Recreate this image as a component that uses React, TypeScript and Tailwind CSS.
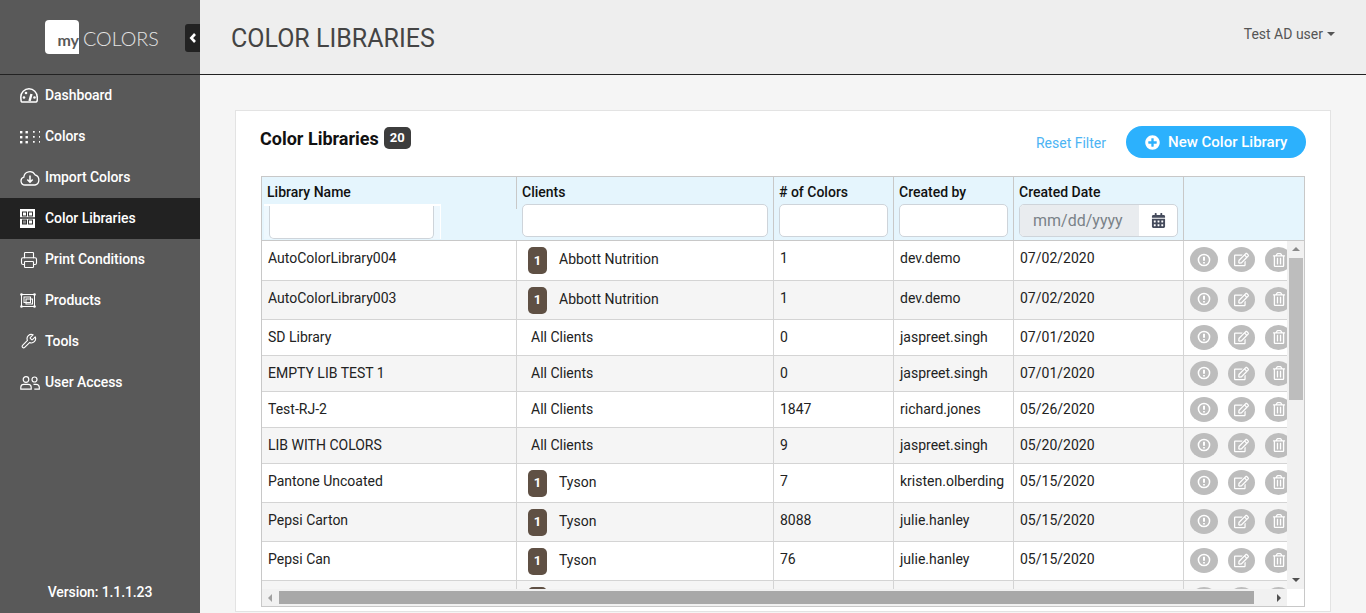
import React from "react";
import { FaCalendarAlt, FaPlusCircle, FaRegEdit, FaRegTrashAlt } from "react-icons/fa";
import { LuPrinter, LuWrench } from "react-icons/lu";

const DashIcon = () => (
  <svg width="18" height="15" viewBox="0 0 18 15" fill="none" stroke="white" strokeWidth="1.5" className="shrink-0">
    <path d="M2 14h14a1 1 0 0 0 .9-.6A8.300 8.300 0 0 0 17.200 9 8.200 8.200 0 0 0 .8 9c0 1.600.2 3 .4 4.400a1 1 0 0 0 .8.600z" />
    <path d="M9.500 13l2-7" strokeWidth="2.400" />
    <circle cx="4" cy="9.500" r="1.300" fill="white" stroke="none" />
    <circle cx="6" cy="5" r="1.300" fill="white" stroke="none" />
    <circle cx="14.500" cy="9.500" r="1.300" fill="white" stroke="none" />
  </svg>
);
const DotsIcon = () => (
  <svg width="20" height="14" viewBox="0 0 20 14" fill="white" className="shrink-0">
    {[0, 1, 2].map((r) =>
      [0, 1, 2, 3].map((c) => {
        const big = c < 2;
        const s = big ? 2.4 : 1.7;
        return <rect key={`${r}${c}`} x={c * 6 + (c > 1 ? 1 : 0) + (c === 1 ? -0.5 : 0)} y={r * 5 + 1} width={s} height={s} />;
      })
    )}
  </svg>
);
const CloudIcon = () => (
  <svg width="20" height="16" viewBox="0 0 20 16" fill="none" stroke="white" strokeWidth="1.300" className="shrink-0">
    <path d="M5 15a4 4 0 0 1-1.200-7.800A6 6 0 0 1 15 4.800a5.300 5.300 0 0 1 0 10.200z" />
    <path d="M10 5.500v6.500M7.300 9.500l2.700 2.700 2.700-2.700" strokeWidth="1.600" />
  </svg>
);
const LibIcon = () => (
  <svg width="16" height="20" viewBox="0 0 16 20" className="shrink-0">
    <rect width="15" height="19" fill="white" />
    <g fill="none" stroke="#333" strokeWidth="1">
      <rect x="2.500" y="3" width="4" height="4" />
      <rect x="8.500" y="3" width="4" height="4" />
      <rect x="2.500" y="11" width="4" height="4" fill="#888" />
      <rect x="8.500" y="11" width="4" height="4" />
    </g>
    <path d="M0 9h15" stroke="#222" strokeWidth="1.400" />
  </svg>
);
const ProductIcon = () => (
  <svg width="16" height="15" viewBox="0 0 16 15" fill="none" stroke="white" className="shrink-0">
    <rect x="1.500" y="1.500" width="13" height="12" />
    <rect x="4" y="4" width="6.500" height="5.500" />
    <rect x="6" y="6" width="6.500" height="5" />
    {[[1.5, 1.5], [14.5, 1.5], [1.5, 13.5], [14.5, 13.5]].map(([x, y]) => (
      <circle key={`${x}${y}`} cx={x} cy={y} r="1.300" fill="white" stroke="none" />
    ))}
  </svg>
);
const UsersIcon = () => (
  <svg width="20" height="14" viewBox="0 0 20 14" fill="none" stroke="white" strokeWidth="1.200" className="shrink-0">
    <circle cx="6" cy="3.500" r="2.800" />
    <path d="M.8 13.200v-2A3 3 0 0 1 3.800 8.300h4.400a3 3 0 0 1 3 3v1.900z" />
    <circle cx="14.500" cy="3.500" r="2.500" />
    <path d="M13.500 8.300h2.500a3.200 3.200 0 0 1 3.300 3v1.900h-5" />
  </svg>
);

const menu: [string, React.ReactNode, boolean?][] = [
  ["Dashboard", <DashIcon />],
  ["Colors", <DotsIcon />],
  ["Import Colors", <CloudIcon />],
  ["Color Libraries", <LibIcon />, true],
  ["Print Conditions", <LuPrinter size={18} color="white" strokeWidth={1.5} className="shrink-0" />],
  ["Products", <ProductIcon />],
  ["Tools", <LuWrench size={17} color="white" strokeWidth={1.6} className="shrink-0" />],
  ["User Access", <UsersIcon />],
];

type Row = { name: string; client: string | null; n: string; by: string; date: string; tall: boolean };
const rows: Row[] = [
  { name: "AutoColorLibrary004", client: "Abbott Nutrition", n: "1", by: "dev.demo", date: "07/02/2020", tall: true },
  { name: "AutoColorLibrary003", client: "Abbott Nutrition", n: "1", by: "dev.demo", date: "07/02/2020", tall: true },
  { name: "SD Library", client: null, n: "0", by: "jaspreet.singh", date: "07/01/2020", tall: false },
  { name: "EMPTY LIB TEST 1", client: null, n: "0", by: "jaspreet.singh", date: "07/01/2020", tall: false },
  { name: "Test-RJ-2", client: null, n: "1847", by: "richard.jones", date: "05/26/2020", tall: false },
  { name: "LIB WITH COLORS", client: null, n: "9", by: "jaspreet.singh", date: "05/20/2020", tall: false },
  { name: "Pantone Uncoated", client: "Tyson", n: "7", by: "kristen.olberding", date: "05/15/2020", tall: true },
  { name: "Pepsi Carton", client: "Tyson", n: "8088", by: "julie.hanley", date: "05/15/2020", tall: true },
  { name: "Pepsi Can", client: "Tyson", n: "76", by: "julie.hanley", date: "05/15/2020", tall: true },
  { name: "", client: "", n: "", by: "", date: "", tall: true },
];

const Act = ({ w, children }: { w: string; children: React.ReactNode }) => (
  <span className={`${w} h-[25px] shrink-0 rounded-[50%] bg-[#bdbdbd] flex items-center justify-center text-white`}>{children}</span>
);

const Alert = () => (
  <svg width="14" height="14" viewBox="0 0 14 14" fill="none" stroke="white" strokeWidth="1.500">
    <circle cx="7" cy="7" r="5.600" />
    <path d="M7 3.800v4" strokeWidth="2" />
    <path d="M7 9v1.400" strokeWidth="1.800" />
  </svg>
);

const inputCls = "h-[33px] border border-[#ced4da] rounded-[5px] bg-white outline-none";

export default function App() {
  return (
    <div className="h-[613px] w-[1366px] overflow-hidden flex bg-[#f5f5f5] font-[Roboto,sans-serif] text-[14px] text-[#212529]">
      <aside className="w-[200px] shrink-0 bg-[#595959] flex flex-col text-white">
        <div className="h-[75px] border-b border-[#222] flex items-center relative">
          <div className="ml-[45px] mb-[1px] w-[34px] h-[34px] bg-white rounded-[4px] rounded-br-none flex items-end justify-end">
            <span className="font-[Lato,sans-serif] font-bold text-[16px] leading-[17px] text-[#595959] pb-[6px]">my</span>
          </div>
          <span className="ml-[4px] pt-[3px] font-[Lato,sans-serif] font-light text-[19.7px] text-[#e4e4e4]">COLORS</span>
          <span className="absolute left-[185px] top-[24px] w-[15px] h-[28px] bg-[#222] rounded-l-[3px] flex items-center justify-center">
            <svg width="8" height="10" viewBox="0 0 8 10" fill="none" stroke="white" strokeWidth="2.600"><path d="M6 1L2.300 5 6 9" /></svg>
          </span>
        </div>
        <nav className="flex flex-col">
          {menu.map(([label, icon, active]) => (
            <div key={label} className={`h-[41px] flex items-center pl-[20px] font-medium tracking-[-0.06px] ${active ? "bg-[#222]" : ""}`}>
              <span className="w-[25px] flex items-center shrink-0">{icon}</span>
              <span>{label}</span>
            </div>
          ))}
        </nav>
        <div className="mt-auto h-[42px] flex items-center justify-center font-medium tracking-[-0.1px]">Version: 1.1.1.23</div>
      </aside>

      <main className="flex-1 flex flex-col min-w-0">
        <header className="h-[75px] shrink-0 bg-[#eeeeee] border-b border-[#222] flex items-center justify-between pl-[31px] pr-[31px]">
          <h1 className="text-[25px] text-[#444] font-normal pt-[3px]">COLOR LIBRARIES</h1>
          <div className="flex items-center gap-[4px] text-[#555] pb-[6px]">
            Test AD user
            <span className="border-x-[4px] border-x-transparent border-t-[4px] border-t-[#555] mb-[1px]" />
          </div>
        </header>
        <div className="flex-1 min-h-0 pt-[35px] pl-[35px] pr-[35px] pb-0">
          <section className="h-[502px] bg-white border border-[#e3e3e3] pl-[24px] pr-[24px] flex flex-col">
            <div className="h-[65px] shrink-0 flex items-start justify-between">
              <div className="flex items-center gap-[5px] pt-[16px]">
                <h2 className="text-[18px] font-bold text-[#111] leading-[24px]">Color Libraries</h2>
                <span className="bg-[#3d3d3d] text-white text-[13px] font-bold rounded-[5px] w-[27px] h-[22px] -mt-[2px] flex items-center justify-center">20</span>
              </div>
              <div className="flex items-center pt-[15px]">
                <span className="text-[#4cb4f4] mr-[20px] pt-[2px]">Reset Filter</span>
                <button className="w-[180px] h-[32px] rounded-full bg-[#2cb1fd] text-white font-medium text-[15px] flex items-center pl-[19px] gap-[8px]">
                  <FaPlusCircle size={15} color="white" /> New Color Library
                </button>
              </div>
            </div>

            <div className="w-[1044px] ml-px h-[431px] border border-[#c8c8c8] flex flex-col overflow-hidden">
              <div className="h-[64px] shrink-0 flex bg-[#e5f5fd] border-b border-[#c8c8c8] font-medium text-[#111]">
                <div className="w-[255px] shrink-0 pl-[5px] relative flex">
                  <div className="w-[249px] pt-[7px] leading-[16px]">Library Name</div>
                  <div className="w-px h-[32px] bg-[#c8c8c8]" />
                  <div className="absolute left-[2px] top-[27px] w-[177px] h-[35px] bg-[#eef8fe] border-t-2 border-r border-white pl-[5px]">
                    <input className={`block w-[165px] ${inputCls} border-t-0 rounded-t-none h-[31px]`} />
                  </div>
                </div>
                <div className="w-[257px] shrink-0 border-r border-[#c8c8c8] pl-[5px]">
                  <div className="pt-[7px] leading-[16px]">Clients</div>
                  <input className={`mt-[4px] w-[246px] ${inputCls}`} />
                </div>
                <div className="w-[120px] shrink-0 border-r border-[#c8c8c8] pl-[5px]">
                  <div className="pt-[7px] leading-[16px]"># of Colors</div>
                  <input className={`mt-[4px] w-[109px] ${inputCls}`} />
                </div>
                <div className="w-[120px] shrink-0 border-r border-[#c8c8c8] pl-[5px]">
                  <div className="pt-[7px] leading-[16px]">Created by</div>
                  <input className={`mt-[4px] w-[109px] ${inputCls}`} />
                </div>
                <div className="w-[170px] shrink-0 border-r border-[#c8c8c8] pl-[5px]">
                  <div className="pt-[7px] leading-[16px]">Created Date</div>
                  <div className={`mt-[4px] w-[159px] ${inputCls} flex overflow-hidden`}>
                    <span className="w-[119px] bg-[#e9ecef] text-[#7a8288] font-normal text-[16px] pl-[13px] flex items-center">mm/dd/yyyy</span>
                    <span className="flex-1 flex items-center justify-center"><FaCalendarAlt size={15} color="#454b5c" /></span>
                  </div>
                </div>
                <div className="flex-1" />
              </div>

              <div className="flex-1 min-h-0 flex">
                <div className="flex-1 min-w-0 overflow-hidden">
                  {rows.map((r, i) => {
                    const text = r.tall ? "pb-[4px]" : "pb-[1px]";
                    const h = i === 0 ? "h-[40px]" : r.tall ? "h-[39px]" : "h-[36px]";
                    return (
                      <div key={i} className={`${h} shrink-0 flex border-b border-[#d4d4d4] text-[#222] ${i % 2 ? "bg-[#f5f5f5]" : "bg-white"}`}>
                        <div className={`w-[255px] shrink-0 border-r border-[#d4d4d4] pl-[6px] flex items-center ${text}`}>{r.name}</div>
                        <div className="w-[257px] shrink-0 border-r border-[#d4d4d4] flex items-center">
                          {r.client === null ? (
                            <span className="pl-[14px]">All Clients</span>
                          ) : (
                            <>
                              <span className="ml-[11px] w-[19px] h-[27px] rounded-[5px] bg-[#5f5044] text-white text-[13px] font-bold flex items-center justify-center">{r.client ? "1" : ""}</span>
                              <span className={`ml-[12px] ${i === 0 ? "pb-[2px]" : "pb-[1px]"}`}>{r.client}</span>
                            </>
                          )}
                        </div>
                        <div className={`w-[120px] shrink-0 border-r border-[#d4d4d4] pl-[6px] flex items-center ${text}`}>{r.n}</div>
                        <div className={`w-[120px] shrink-0 border-r border-[#d4d4d4] pl-[6px] flex items-center ${text}`}>{r.by}</div>
                        <div className={`w-[170px] shrink-0 border-r border-[#d4d4d4] pl-[6px] flex items-center ${text}`}>{r.date}</div>
                        <div className={`flex-1 min-w-0 overflow-hidden flex items-center pl-[6px] gap-[10px] ${r.tall ? "pb-[2px]" : "pb-[1px]"}`}>
                          <Act w="w-[28px]"><Alert /></Act>
                          <Act w="w-[27px]"><FaRegEdit size={15} /></Act>
                          <Act w="w-[27px]"><FaRegTrashAlt size={14} /></Act>
                        </div>
                      </div>
                    );
                  })}
                </div>
                <div className="w-[17px] shrink-0 bg-[#f1f1f1] flex flex-col items-center">
                  <span className="mt-[6px] border-x-[4px] border-x-transparent border-b-[4px] border-b-[#8a8a8a]" />
                  <div className="mt-[7px] w-[14px] h-[142px] bg-[#bdbdbd]" />
                  <span className="mt-auto mb-[7px] border-x-[4px] border-x-transparent border-t-[4px] border-t-[#505050]" />
                </div>
              </div>

              <div className="h-[17px] shrink-0 flex items-center bg-[#f1f1f1]">
                <span className="ml-[6px] border-y-[4px] border-y-transparent border-r-[4px] border-r-[#a0a0a0]" />
                <div className="ml-[7px] w-[975px] h-[13px] bg-[#a8a8a8]" />
                <span className="ml-[23px] border-y-[4px] border-y-transparent border-l-[4px] border-l-[#505050]" />
                <div className="ml-auto w-[17px] h-full bg-white" />
              </div>
            </div>
          </section>
        </div>
      </main>
    </div>
  );
}
